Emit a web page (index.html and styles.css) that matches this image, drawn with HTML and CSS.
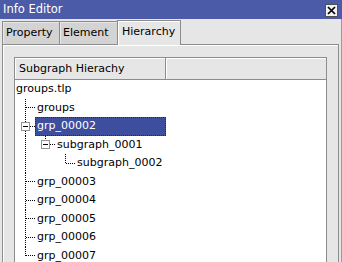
FILE: index.html
```html
<!DOCTYPE html>
<html>
<head>
<meta charset="utf-8">
<title>Info Editor</title>
<link rel="stylesheet" href="styles.css">
</head>
<body>
<div class="titlebar">
  <span class="title">Info Editor</span>
  <span class="close"><svg width="11" height="11" viewBox="0 0 11 11"><path d="M2 2 L9 9 M9 2 L2 9" stroke="#000" stroke-width="1.7" fill="none"/></svg></span>
</div>
<div class="main">
  <div class="tabs">
    <div class="tab t1">Property</div>
    <div class="tab t2">Element</div>
    <div class="tab t3 active">Hierarchy</div>
  </div>
  <div class="panel">
    <div class="list">
      <div class="head">
        <div class="hcell first">Subgraph Hierachy</div>
        <div class="hcell"></div>
      </div>
      <div class="body">
        <div class="tree">
          <div class="row root"><span class="lbl">groups.tlp</span></div>
          <div class="row"><span class="br tee"></span><span class="lbl">groups</span></div>
          <div class="row"><span class="br tee"><span class="box"></span></span><span class="lbl sel">grp_00002</span></div>
          <div class="row"><span class="br pipe"></span><span class="br ell"><span class="box"></span></span><span class="lbl">subgraph_0001</span></div>
          <div class="row"><span class="br pipe"></span><span class="br"></span><span class="br ell"></span><span class="lbl">subgraph_0002</span></div>
          <div class="row"><span class="br tee"></span><span class="lbl">grp_00003</span></div>
          <div class="row"><span class="br tee"></span><span class="lbl">grp_00004</span></div>
          <div class="row"><span class="br tee"></span><span class="lbl">grp_00005</span></div>
          <div class="row"><span class="br tee"></span><span class="lbl">grp_00006</span></div>
          <div class="row"><span class="br ell"></span><span class="lbl">grp_00007</span></div>
        </div>
      </div>
    </div>
  </div>
</div>
</body>
</html>
```
FILE: styles.css
```css
html, body {
  margin: 0;
  padding: 0;
  overflow: hidden;
  height: 262px;
}
body {
  background: #e6e6e6;
  font-family: "DejaVu Sans", "Liberation Sans", sans-serif;
  font-size: 11px;
  color: #000;
  display: flex;
  flex-direction: column;
}
.titlebar {
  display: flex;
  align-items: flex-start;
  height: 19px;
  flex: none;
  background: #4b5ba8;
}
.title {
  color: #fff;
  font-size: 11.5px;
  line-height: 19px;
  padding-left: 3px;
}
.close {
  margin-left: auto;
  margin-top: 4px;
  margin-right: 4px;
  width: 13px;
  height: 13px;
  box-sizing: border-box;
  background: #f2f2f2;
  border: 1px solid #505050;
  display: flex;
  align-items: center;
  justify-content: center;
}
.close svg { display: block; }
.main {
  flex: 1;
  min-height: 0;
  display: flex;
  flex-direction: column;
  padding: 0 2px;
  border-right: 1px solid #9a9a9a;
}
.tabs {
  display: flex;
  align-items: flex-end;
  height: 25px;
  flex: none;
}
.tab {
  box-sizing: border-box;
  height: 23px;
  line-height: 22px;
  padding-left: 3px;
  background: #d3d3d3;
  border: 1px solid #8c8c8c;
  border-bottom: none;
  box-shadow: inset 1px 1px 0 #e8e8e8;
  white-space: nowrap;
}
.t1 { width: 58px; }
.t2 { width: 59px; margin-left: -1px; }
.t3 { width: 64px; margin-left: -1px; }
.tab.active {
  height: 25px;
  margin-bottom: -1px;
  background: #e6e6e6;
  box-shadow: inset 1px 1px 0 #fff;
  position: relative;
  z-index: 1;
  padding-left: 4px;
}
.panel {
  flex: 1;
  min-height: 0;
  display: flex;
  flex-direction: column;
  border: 1px solid #8c8c8c;
  border-bottom: none;
  box-shadow: inset 1px 1px 0 #fff;
  padding: 12px 11px 0 11px;
}
.list {
  flex: 1;
  min-height: 0;
  overflow: hidden;
  border: 1px solid #8c8c8c;
  border-bottom: none;
  background: #fff;
}
.head {
  display: flex;
  height: 21px;
  border-bottom: 1px solid #8c8c8c;
  background: #e6e6e6;
}
.hcell {
  flex: 1;
  line-height: 21px;
  padding-left: 3px;
  box-shadow: inset 1px 1px 0 #fff;
  white-space: nowrap;
}
.hcell.first {
  flex: none;
  width: 151px;
  box-sizing: border-box;
  border-right: 1px solid #8c8c8c;
  padding-left: 4px;
}
.tree {
  width: 151px;
}
.row {
  display: flex;
  height: 18.5px;
  line-height: 18.5px;
  white-space: nowrap;
}
.lbl {
  flex: 1;
  padding: 0 2px;
}
.root .lbl { padding-left: 1px; }
.lbl.sel {
  background: #3d4e9e;
  color: #fff;
  outline: 1px dotted #1c2766;
  outline-offset: -1px;
}
.br {
  --v: repeating-linear-gradient(to bottom, #000 0 1px, transparent 1px 2px);
  --h: repeating-linear-gradient(to right, #000 0 1px, transparent 1px 2px);
  flex: none;
  width: 20px;
  display: flex;
  align-items: center;
}
.br.pipe {
  background: var(--v) 10px 0 / 1px 100% no-repeat;
}
.br.tee {
  background: var(--v) 10px 0 / 1px 100% no-repeat, var(--h) 11px 50% / 9px 1px no-repeat;
}
.br.ell {
  background: var(--v) 10px 0 / 1px 50% no-repeat, var(--h) 11px 50% / 9px 1px no-repeat;
}
.box {
  box-sizing: border-box;
  width: 9px;
  height: 9px;
  margin-left: 6px;
  border: 1px solid #939393;
  background: linear-gradient(#000, #000) center / 5px 1px no-repeat, #fff;
}
```
